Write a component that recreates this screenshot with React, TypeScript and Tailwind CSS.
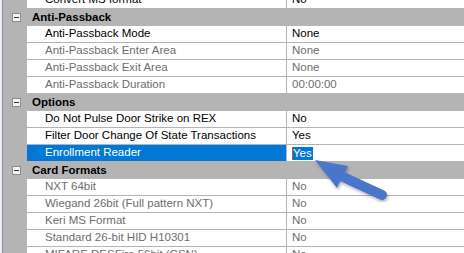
import type { ReactNode } from 'react';

type Item = {
  label: string;
  value: string;
  disabled?: boolean;
  selected?: boolean;
};

type Section = {
  title: string | null;
  items: Item[];
};

const sections: Section[] = [
  { title: null, items: [{ label: 'Convert MS format', value: 'No' }] },
  {
    title: 'Anti-Passback',
    items: [
      { label: 'Anti-Passback Mode', value: 'None' },
      { label: 'Anti-Passback Enter Area', value: 'None', disabled: true },
      { label: 'Anti-Passback Exit Area', value: 'None', disabled: true },
      { label: 'Anti-Passback Duration', value: '00:00:00', disabled: true },
    ],
  },
  {
    title: 'Options',
    items: [
      { label: 'Do Not Pulse Door Strike on REX', value: 'No' },
      { label: 'Filter Door Change Of State Transactions', value: 'Yes' },
      { label: 'Enrollment Reader', value: 'Yes', selected: true },
    ],
  },
  {
    title: 'Card Formats',
    items: [
      { label: 'NXT 64bit', value: 'No', disabled: true },
      { label: 'Wiegand 26bit (Full pattern NXT)', value: 'No', disabled: true },
      { label: 'Keri MS Format', value: 'No', disabled: true },
      { label: 'Standard 26-bit HID H10301', value: 'No', disabled: true },
      { label: 'MIFARE DESFire 56bit (CSN)', value: 'No', disabled: true },
    ],
  },
];

function CategoryRow({ title }: { title: string }) {
  return (
    <div className="flex h-[17px] items-center bg-[#b4b4b4]">
      <div className="flex w-[24px] shrink-0 justify-center pl-[2px]">
        <div className="flex h-[9px] w-[9px] items-center justify-center border border-[#8c8c8c] bg-[#f4f4f4]">
          <div className="h-px w-[5px] bg-[#333]" />
        </div>
      </div>
      <span className="pl-[5px] font-bold text-black">{title}</span>
    </div>
  );
}

function PropRow({ item }: { item: Item }) {
  const textColor = item.disabled ? 'text-[#6d6d6d]' : 'text-black';
  let value: ReactNode = <span className={textColor}>{item.value}</span>;
  if (item.selected) {
    value = (
      <span className="flex items-center">
        <span className="h-[13px] w-px bg-[#c65a1e]" />
        <span className="bg-[#0078d7] pr-px leading-[13px] text-white">{item.value}</span>
      </span>
    );
  }

  return (
    <div className="flex h-[17px]">
      <div className="w-[24px] shrink-0 bg-[#b4b4b4]" />
      <div
        className={
          'flex w-[259px] shrink-0 items-center border-b border-[#b4b4b4] pl-[18px] whitespace-nowrap overflow-hidden ' +
          (item.selected ? 'bg-[#0078d7] text-white' : 'bg-white ' + textColor)
        }
      >
        {item.label}
      </div>
      <div className="w-px shrink-0 bg-[#b4b4b4]" />
      <div className="flex flex-1 items-center border-b border-[#b4b4b4] bg-white pl-[5px]">
        {value}
      </div>
    </div>
  );
}

export default function App() {
  return (
    <div
      className="relative h-[253px] w-[464px] overflow-hidden bg-white text-[11.5px]"
      style={{ fontFamily: '"Liberation Sans", Arial, sans-serif' }}
    >
      <div className="flex h-full">
        {/* left frame edge */}
        <div className="flex shrink-0">
          <div className="w-[2px] bg-[#eeeeee]" />
          <div className="w-px bg-[#8193ad]" />
        </div>

        <div className="-mt-[8px] flex flex-1 flex-col">
          {sections.map((section, i) => (
            <div key={i}>
              {section.title && <CategoryRow title={section.title} />}
              {section.items.map((item) => (
                <PropRow key={item.label} item={item} />
              ))}
            </div>
          ))}
        </div>
      </div>

      {/* callout arrow */}
      <svg
        className="absolute left-[305px] top-[150px]"
        width="95"
        height="60"
        viewBox="0 0 95 60"
      >
        <defs>
          <filter id="sh" x="-20%" y="-20%" width="140%" height="140%">
            <feDropShadow dx="1" dy="2" stdDeviation="1.5" floodColor="#000" floodOpacity="0.3" />
          </filter>
        </defs>
        <g filter="url(#sh)">
          <line x1="36" y1="26" x2="77" y2="45" stroke="#4a76c9" strokeWidth="10" strokeLinecap="round" />
          <polygon points="10,10 43,16 32,38" fill="#4a76c9" />
        </g>
      </svg>
    </div>
  );
}
